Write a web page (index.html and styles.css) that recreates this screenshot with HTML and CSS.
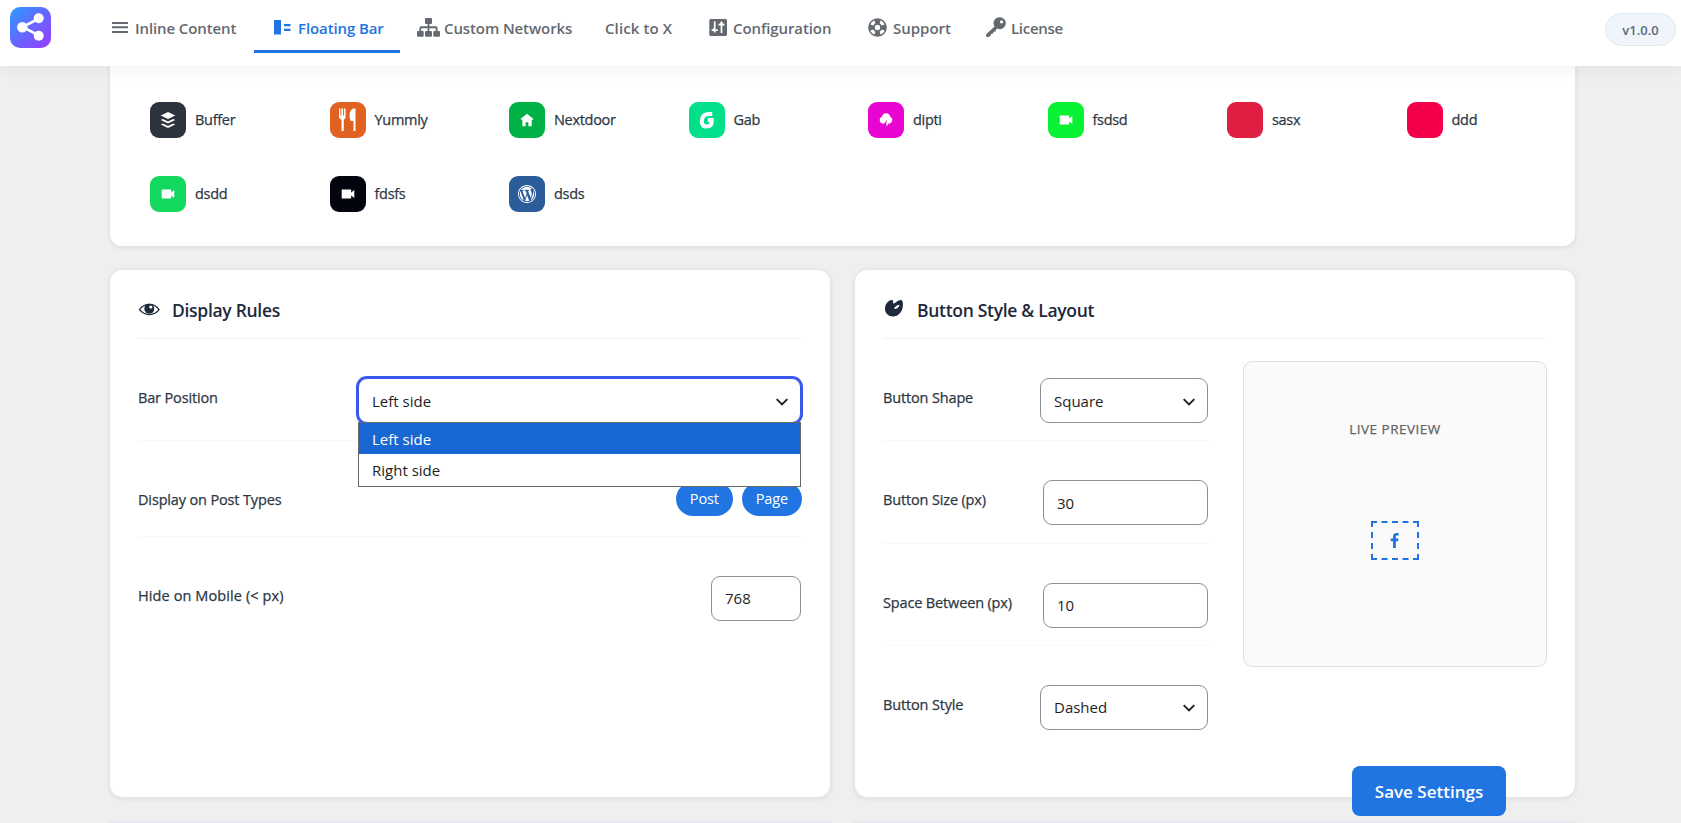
FILE: index.html
```html
<!DOCTYPE html>
<html lang="en">
<head>
    <meta charset="UTF-8">
    <meta name="viewport" content="width=device-width, initial-scale=1.0">
    <title>Floating Bar</title>
    <link rel="stylesheet" href="styles.css">
</head>
<body>
  <header class="topbar">
    <svg class="logo" viewBox="0 0 41 41">
      <defs>
        <linearGradient id="logobg" x1="0" y1="0" x2="1" y2="1">
          <stop offset="0" stop-color="#2a9dff"/>
          <stop offset="0.5" stop-color="#6467ff"/>
          <stop offset="1" stop-color="#9b3cff"/>
        </linearGradient>
      </defs>
      <rect width="41" height="41" rx="10" fill="url(#logobg)"/>
      <path d="M29 11.500L12.500 20L29 28.500" fill="none" stroke="#fff" stroke-width="2.600"/>
      <circle cx="28.700" cy="11.300" r="5" fill="#fff"/>
      <circle cx="12.300" cy="20.300" r="5.200" fill="#fff"/>
      <circle cx="28.700" cy="28.700" r="5" fill="#fff"/>
    </svg>
    <nav class="tabs">
      <a class="tab tab-inline">
        <svg viewBox="0 0 24 24"><path d="M4 6h16v2H4zM4 10.300h16v2H4zM4 15h16v2H4z"/></svg>
        <span>Inline Content</span>
      </a>
      <a class="tab tab-floating active">
        <svg viewBox="0 0 24 24"><path d="M4 4h7v14.500H4zM14 8h6.500v2.300H14zM14 12.700h6.500V15H14z"/></svg>
        <span>Floating Bar</span>
      </a>
      <a class="tab tab-networks">
        <svg viewBox="0 0 24 24"><path d="M10 2h5a1 1 0 0 1 1 1v4a1 1 0 0 1-1 1h-1.600v2.300H20a1.500 1.500 0 0 1 1.500 1.500V15H23a1 1 0 0 1 1 1v3.700a1 1 0 0 1-1 1h-4.700a1 1 0 0 1-1-1V16a1 1 0 0 1 1-1h1.400v-2.800h-6.300V15H15a1 1 0 0 1 1 1v3.700a1 1 0 0 1-1 1h-5a1 1 0 0 1-1-1V16a1 1 0 0 1 1-1h1.600v-2.800H5.300V15h1.400a1 1 0 0 1 1 1v3.700a1 1 0 0 1-1 1H2a1 1 0 0 1-1-1V16a1 1 0 0 1 1-1h1.500v-3.200A1.500 1.500 0 0 1 5 10.300h6.600V8H10a1 1 0 0 1-1-1V3a1 1 0 0 1 1-1z"/></svg>
        <span>Custom Networks</span>
      </a>
      <a class="tab tab-click">
        <span>Click to X</span>
      </a>
      <a class="tab tab-config">
        <svg viewBox="0 0 24 24">
          <rect x="4.300" y="3" width="17.700" height="17" rx="1.500"/>
          <path d="M9.700 5.500v11M6.700 14.200h6M9.700 12l-1.500 2M16.500 17V6M13.500 8.700h6M15 9l1.500-2.500L18 9" fill="none" stroke="#fff" stroke-width="1.700"/>
        </svg>
        <span>Configuration</span>
      </a>
      <a class="tab tab-support">
        <svg viewBox="0 0 24 24">
          <circle cx="12.500" cy="11.500" r="8.600" fill="none" stroke="currentColor" stroke-width="1.500"/>
          <circle cx="12.500" cy="11.500" r="3.700" fill="none" stroke="currentColor" stroke-width="2"/>
          <path d="M9 3.200h7l-1.900 5.300h-3.200zM9 19.800h7l-1.900-5.300h-3.200zM4.200 8v7l5.300-1.900V9.900zM20.800 8v7l-5.300-1.900V9.900z"/>
        </svg>
        <span>Support</span>
      </a>
      <a class="tab tab-license">
        <svg viewBox="0 0 24 24"><path fill-rule="evenodd" d="M16.800 1.200a6 6 0 1 1-2.600 11.400L12.800 14l-.3 1.400-2 .4-.4 1.800-1.900.4-1.300 2.400-3 .9-.9-1.300.2-1.700 8.400-7.700A6 6 0 0 1 16.800 1.200zm1.700 3.100a1.600 1.600 0 1 0 .1 0z"/></svg>
        <span>License</span>
      </a>
    </nav>
    <span class="version">v1.0.0</span>
  </header>

  <main class="content">
    <section class="card networks">
      <div class="network">
        <span class="badge buffer"><svg viewBox="0 0 20 20"><path d="M10 1l8 4-8 4-8-4zM2 10l2.300-1.200L10 11.600l5.700-2.800L18 10l-8 4zM2 15l2.300-1.200 5.700 2.800 5.700-2.800L18 15l-8 4z"/></svg></span>
        Buffer
      </div>
      <div class="network">
        <span class="badge yummly"><svg class="big" viewBox="0 0 26 26"><path d="M4 1.500h1.400v7h1V1.500h1.700v7h1v-7h1.500v8.500c0 1.400-1 2.200-1.800 2.700V24H6.500V12.700C5 12 4 11.200 4 10zM20.500 1.500V24h-2V14h-2.700c-.9-1.800-1.400-4-1.200-6.300.2-3 1.700-6.200 4.200-6.200z"/></svg></span>
        Yummly
      </div>
      <div class="network">
        <span class="badge nextdoor"><svg viewBox="0 0 20 20"><path d="M10 3l7.200 5.800-1 1.200-1-.7V17h-3.700v-4.600h-3V17H4.800V9.300l-1 .7-1-1.200z"/></svg></span>
        Nextdoor
      </div>
      <div class="network">
        <span class="badge gab"><svg viewBox="0 0 20 20"><path d="M15.800 3.300h-3C7.300 3.300 4.200 6.200 4.200 11.300c0 4 2 5.900 5.400 5.900 3.300 0 5.500-1.700 5.500-5V10H11" fill="none" stroke="#fff" stroke-width="4.500"/></svg></span>
        Gab
      </div>
      <div class="network">
        <span class="badge dipti"><svg viewBox="0 0 20 20"><path d="M10 2.500c2.800 0 4.600 1.900 4.700 3.900 1.500.5 2.300 1.800 2.300 3.300 0 2.600-1.800 4.400-4.300 4.400h-.4l-1.300 3.400-.8-3.200 1-4.300-1.900 2.200-1.100 1.700c-1 .4-4.800.3-5.200-3.400-.2-2.200 1-3.700 2.600-4.100.2-2.200 2-3.900 4.400-3.900z"/></svg></span>
        dipti
      </div>
      <div class="network">
        <span class="badge fsdsd"><svg viewBox="0 0 20 20"><path d="M3 5h10.500v3.200L17 5.500v9l-3.500-2.700V15H3z"/></svg></span>
        fsdsd
      </div>
      <div class="network">
        <span class="badge sasx"></span>
        sasx
      </div>
      <div class="network">
        <span class="badge ddd"></span>
        ddd
      </div>
      <div class="network">
        <span class="badge dsdd"><svg viewBox="0 0 20 20"><path d="M3 5h10.500v3.200L17 5.500v9l-3.500-2.700V15H3z"/></svg></span>
        dsdd
      </div>
      <div class="network">
        <span class="badge fdsfs"><svg viewBox="0 0 20 20"><path d="M3 5h10.500v3.200L17 5.500v9l-3.500-2.700V15H3z"/></svg></span>
        fdsfs
      </div>
      <div class="network">
        <span class="badge dsds"><svg viewBox="0 0 20 20"><path d="M20 10c0-5.520-4.480-10-10-10S0 4.480 0 10s4.480 10 10 10 10-4.480 10-10zM10 1.010c4.970 0 8.990 4.020 8.990 8.990s-4.020 8.990-8.990 8.990S1.010 14.970 1.010 10 5.030 1.010 10 1.010zM8.010 14.820L4.960 6.610c.49-.03 1.050-.08 1.050-.08.43-.05.38-1.010-.06-.99 0 0-1.290.1-2.130.1-.15 0-.33 0-.52-.01 1.440-2.170 3.900-3.600 6.700-3.600 2.090 0 3.990.79 5.410 2.090-.6-.08-1.450.35-1.450 1.420 0 .66.38 1.220.79 1.880.31.54.5 1.220.5 2.210 0 1.340-1.270 4.480-1.270 4.480l-2.710-7.500c.48-.03.75-.16.75-.16.43-.05.38-1.100-.05-1.080 0 0-1.300.11-2.140.11-.78 0-2.110-.11-2.110-.11-.43-.02-.48 1.060-.05 1.080l.84.08 1.120 3.040zm6.020 2.150L16.640 10s.67-1.690.39-3.810c.63 1.140.94 2.420.94 3.810 0 2.960-1.560 5.580-3.940 6.970zM2.680 6.770L6.500 17.250c-2.670-1.300-4.470-4.080-4.470-7.250 0-1.160.2-2.230.65-3.230zm7.450 4.530l2.290 6.250c-.75.27-1.570.42-2.420.42-.72 0-1.410-.11-2.060-.3z"/></svg></span>
        dsds
      </div>
    </section>

    <div class="columns">
      <section class="card panel">
        <h2 class="title">
          <svg viewBox="0 0 22 22">
            <path d="M1.500 11.700C6.500 4.700 16.500 4.700 21 11.700c-4.500 6.500-14.500 6.500-19.500 0z" fill="none" stroke="currentColor" stroke-width="1.300"/>
            <circle cx="11.300" cy="10.800" r="5"/>
            <circle cx="12.800" cy="9" r="1.600" fill="#fff"/>
          </svg>
          Display Rules
        </h2>
        <div class="row">
          <label>Bar Position</label>
          <div class="select wide open">
            <span>Left side</span>
            <svg class="arrow" viewBox="0 0 12 8"><path d="M.7 1.200L6 6.500l5.300-5.300"/></svg>
            <ul class="options">
              <li class="selected">Left side</li>
              <li>Right side</li>
            </ul>
          </div>
        </div>
        <div class="row short">
          <label>Display on Post Types</label>
          <div class="pills">
            <span class="pill">Post</span>
            <span class="pill">Page</span>
          </div>
        </div>
        <div class="row last">
          <label class="loose">Hide on Mobile (&lt; px)</label>
          <input class="field small" type="text" value="768">
        </div>
      </section>

      <section class="card panel">
        <h2 class="title">
          <svg viewBox="0 0 22 22"><path fill-rule="evenodd" d="M7.500 2.300c1.700-.6 3 .2 2.700 1.600-.3 1.300.2 2 1.200 1.400C13.500 3.500 16 1.700 18.500 1.900c2 1.700 1.700 6.500.6 9.600-1.500 4.200-5 7-9 7C5.500 18.500 2 15.300 2 11c0-4 2.200-7.600 5.500-8.700zM11.300 11c1.800.3 4.700-1.500 5.300-4.300-2.400.2-5.300 2.100-5.300 4.300z"/></svg>
          Button Style &amp; Layout
        </h2>
        <div class="split">
          <div class="settings">
            <div class="row">
              <label>Button Shape</label>
              <div class="select">
                <span>Square</span>
                <svg class="arrow" viewBox="0 0 12 8"><path d="M.7 1.200L6 6.500l5.300-5.300"/></svg>
              </div>
            </div>
            <div class="row">
              <label>Button Size (px)</label>
              <input class="field" type="text" value="30">
            </div>
            <div class="row">
              <label>Space Between (px)</label>
              <input class="field" type="text" value="10">
            </div>
            <div class="row last">
              <label>Button Style</label>
              <div class="select">
                <span>Dashed</span>
                <svg class="arrow" viewBox="0 0 12 8"><path d="M.7 1.200L6 6.500l5.300-5.300"/></svg>
              </div>
            </div>
          </div>
          <div class="preview">
            <span class="preview-title">LIVE PREVIEW</span>
            <span class="preview-button"><svg viewBox="0 0 20 20"><path d="M8.460 18h2.930v-7.300h2.450l.37-2.840h-2.820V6.040c0-.82.23-1.380 1.410-1.380h1.510V2.110c-.26-.03-1.150-.11-2.190-.11-2.180 0-3.660 1.330-3.660 3.760v2.100H6v2.840h2.460V18z"/></svg></span>
          </div>
        </div>
      </section>

      <section class="card next"></section>
      <section class="card next"></section>
    </div>
  </main>

  <button class="save">Save Settings</button>
</body>
</html>
```

FILE: styles.css
```css
*{
  box-sizing: border-box;
}
body,html{
  height: 100%;
  margin: 0;
}
body{
  background: #efefef;
  font-family: "Open Sans", "Noto Sans", sans-serif;
  font-size: 14px;
  color: #2c3745;
  overflow: hidden;
}
svg{
  fill: currentColor;
  flex: none;
}

/* top bar */
.topbar{
  position: relative;
  z-index: 2;
  height: 66px;
  padding: 0 5px 0 10px;
  display: flex;
  align-items: flex-start;
  background: #fff;
  box-shadow: 0 4px 15px rgba(0,0,0,0.05);
}
.logo{
  width: 41px;
  height: 41px;
  margin-top: 7px;
}
.tabs{
  display: flex;
  margin-left: 41px;
}
.tab{
  height: 53px;
  padding: 0 0 0 16px;
  display: flex;
  align-items: center;
  gap: 4px;
  border-bottom: 3px solid transparent;
  font-size: 15px;
  font-weight: 600;
  letter-spacing: -0.1px;
  line-height: 20px;
  white-space: nowrap;
  color: #646970;
}
.tab svg{
  width: 24px;
  height: 24px;
  margin-top: 6px;
}
.tab span{
  margin-top: 5px;
}
.tab.active{
  color: #2075e3;
  border-color: #2075e3;
}
.tab-inline{
  width: 161px;
}
.tab-floating{
  width: 146px;
}
.tab-inline + .tab-floating{
  margin-left: 1px;
  width: 146px;
}
.tab-inline svg{
  margin-right: -1px;
}
.tab-networks{
  width: 189px;
}
.tab-click{
  width: 100px;
  letter-spacing: 0.1px;
}
.tab-config{
  width: 160px;
}
.tab-support{
  width: 118px;
  letter-spacing: 0;
}
.tab-license{
  letter-spacing: -0.3px;
}
.version{
  width: 71px;
  height: 33px;
  margin: 13px 0 0 auto;
  border: 1px solid #e2e8f0;
  border-radius: 17px;
  background: #f0f5fc;
  color: #5b6779;
  font-size: 13px;
  font-weight: 600;
  line-height: 32px;
  text-align: center;
}

/* cards */
.content{
  width: 1467px;
  height: 757px;
  margin-left: 109px;
  overflow: visible;
}
.card{
  background: #fff;
  border: 1px solid #e2e6ef;
  border-radius: 13px;
  box-shadow: 0 1px 4px rgba(0,0,0,0.08);
}
.networks{
  height: 181px;
  padding: 24px 28px 0;
  border-top: none;
  border-radius: 0 0 13px 13px;
  display: grid;
  grid-template-columns: repeat(8, 1fr);
  grid-auto-rows: 60px;
  gap: 14px 27px;
}
.network{
  padding: 12px;
  display: flex;
  align-items: center;
  gap: 9px;
  font-size: 14.500px;
  letter-spacing: -0.3px;
  line-height: 18px;
  -webkit-text-stroke: 0.25px;
}
.badge{
  width: 36px;
  height: 36px;
  border-radius: 9px;
  display: flex;
  justify-content: center;
  align-items: center;
  flex: none;
  color: #fff;
}
.badge svg{
  width: 18px;
  height: 18px;
}
.badge .big{
  width: 26px;
  height: 26px;
}
.buffer{ background: #2c323e; }
.yummly{ background: #e16120; }
.nextdoor{ background: #00b246; }
.gab{ background: #00e08b; }
.dipti{ background: #e805d1; }
.fsdsd{ background: #08f132; }
.sasx{ background: #e01e44; }
.ddd{ background: #f30048; }
.dsdd{ background: #12d85d; }
.fdsfs{ background: #02050d; }
.dsds{ background: #2b5d9b; }

.columns{
  margin-top: 22px;
  display: grid;
  grid-template-columns: 1fr 1fr;
  gap: 24px 23px;
}
.panel{
  height: 529px;
  padding: 28px 28px 0;
}
.next{
  height: 1px;
  border-bottom: none;
  border-radius: 13px 13px 0 0;
}
.title{
  height: 41px;
  margin: 0;
  display: flex;
  align-items: flex-start;
  gap: 12px;
  border-bottom: 1px solid #f0f2f7;
  font-size: 17.500px;
  font-weight: 600;
  letter-spacing: -0.3px;
  line-height: 24px;
  color: #1e293b;
}
.title svg{
  width: 22px;
  height: 22px;
}

/* setting rows */
.row{
  height: 102.300px;
  padding: 39px 1px 0 0;
  display: flex;
  justify-content: space-between;
  align-items: flex-start;
  border-bottom: 1px solid #f7f8fa;
}
.row.short{
  height: 95.700px;
}
.row.last{
  border-bottom: none;
}
.row label{
  padding-top: 10px;
  font-size: 14.500px;
  letter-spacing: -0.150px;
  line-height: 20px;
  -webkit-text-stroke: 0.25px;
}
.row .loose{
  letter-spacing: 0.100px;
}
.field,.select{
  height: 45px;
  border: 1px solid #8c8f94;
  border-radius: 9px;
  background: #fff;
  padding: 0 13px;
  font-family: inherit;
  font-size: 15px;
  color: #1e1e1e;
}
.field{
  width: 165px;
}
.field.small{
  width: 90px;
}
.select{
  position: relative;
  width: 168px;
  padding-right: 12px;
  display: flex;
  justify-content: space-between;
  align-items: center;
  line-height: 20px;
}
.select.wide{
  width: 443px;
}
.select.open{
  border-color: #3858e9;
  box-shadow: 0 0 0 2px #3858e9;
}
.arrow{
  width: 12px;
  height: 8px;
  margin-top: 2px;
}
.arrow path{
  fill: none;
  stroke: #1e1e1e;
  stroke-width: 1.900;
}
.options{
  position: absolute;
  z-index: 1;
  top: 43px;
  left: -1px;
  width: 443px;
  margin: 0;
  padding: 0;
  list-style: none;
  background: #fff;
  border: 1px solid #686868;
}
.options li{
  height: 32px;
  padding: 0 13px;
  line-height: 32px;
}
.options .selected{
  height: 31px;
  background: #1967d2;
  color: #fff;
}
.pills{
  display: flex;
  gap: 9px;
  margin: 2px -1px 0 0;
}
.pill{
  height: 34px;
  padding: 0 14px;
  border-radius: 17px;
  background: #2075e3;
  color: #fff;
  font-size: 14.500px;
  letter-spacing: -0.150px;
  line-height: 34px;
}

/* button preview */
.split{
  display: flex;
  gap: 34px;
}
.settings{
  width: 326px;
}
.preview{
  width: 304px;
  height: 306px;
  margin-top: 22px;
  padding-top: 57px;
  display: flex;
  flex-direction: column;
  align-items: center;
  gap: 82px;
  border: 1px solid #dddee0;
  border-radius: 9px;
  background: #fafafa;
}
.preview-title{
  font-size: 13.500px;
  line-height: 20px;
  letter-spacing: 0.500px;
  color: #646464;
  -webkit-text-stroke: 0.25px;
}
.preview-button{
  width: 48px;
  height: 39px;
  display: flex;
  justify-content: center;
  align-items: center;
  border: 2px dashed #2075e3;
  color: #2075e3;
}
.preview-button svg{
  width: 19px;
  height: 19px;
  margin-right: 1px;
}

.save{
  position: fixed;
  right: 175px;
  bottom: 7px;
  z-index: 3;
  width: 154px;
  height: 50px;
  border: none;
  border-radius: 8px;
  background: #2075e3;
  color: #fff;
  font-family: inherit;
  font-size: 17px;
  font-weight: 600;
}
```
